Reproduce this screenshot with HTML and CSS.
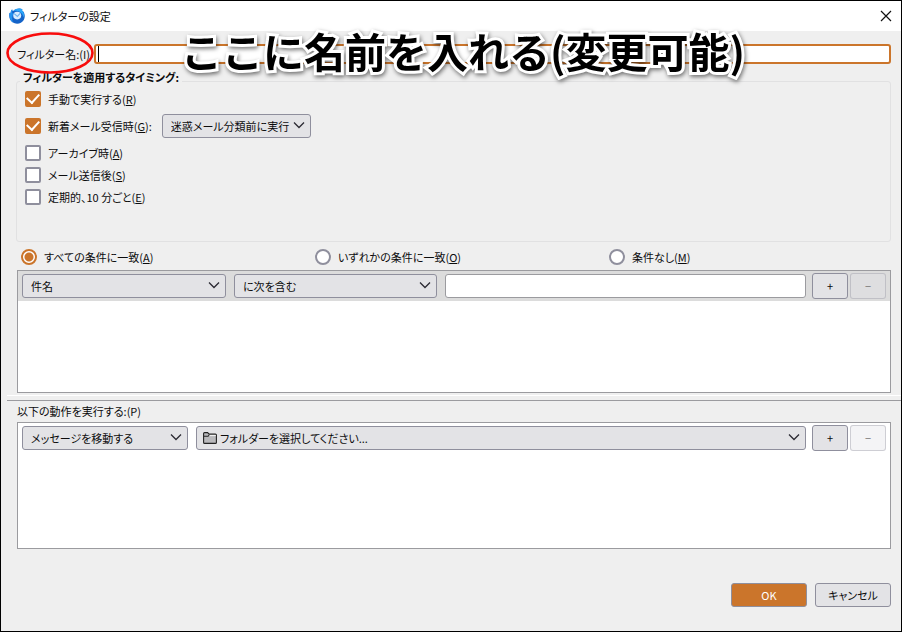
FILE: index.html
```html
<!DOCTYPE html>
<html lang="ja">
<head>
<meta charset="utf-8">
<title>フィルターの設定</title>
<link rel="stylesheet" href="styles.css">
</head>
<body>
<svg class="symbols" aria-hidden="true">
  <symbol id="chevron" viewBox="0 0 12 8"><path d="M1 1.5 6 6.5 11 1.5" fill="none" stroke="#2b2a33" stroke-width="1.3"/></symbol>
</svg>
<div class="window">
  <header class="titlebar">
    <svg class="logo" viewBox="0 0 16 16" aria-hidden="true">
      <path d="M3.200 1.200C3 2.500 3.500 3 4.500 2.800 7 .3 11.500-.2 13.500 1.600L12.800 2.200C16 4 16.500 9 14.800 12 12.500 16 7 16.800 3.500 14.300.5 12.200-.3 8.500.5 4.800L1.500 5.800C1.600 4 2 2.300 3.200 1.200z" fill="#1463c8"/>
      <path d="M.5 4.800C0 9 1.200 12.500 4 14.600c-1-3-1.500-6.500.8-9.600L3.200 5.600 3.200 1.200C2 2.500 1.600 4 1.500 5.800z" fill="#2294f2"/>
      <path d="M4.500 2.800C7 .3 11.500-.2 13.500 1.600L12.800 2.200C15 4 15.600 7 14.500 9.500 14 6.500 12.500 4.500 10 3.500 8 2.800 6 3 4.500 2.800z" fill="#2aa6fa"/>
      <ellipse cx="8.200" cy="7.600" rx="4" ry="3.800" fill="#d8edff"/>
      <path d="M5.200 5.600 8.400 8.400 11.400 5.200" fill="none" stroke="#6fb3ee" stroke-width="1.200"/>
    </svg>
    <h1 class="title">フィルターの設定</h1>
    <button class="close" type="button" aria-label="閉じる">
      <svg viewBox="0 0 12 12"><path d="M1 1 11 11M11 1 1 11" stroke="#111" stroke-width="1.2"/></svg>
    </button>
  </header>
  <form class="content">
    <div class="name-row">
      <label class="name-label" for="name">フィルター名:(I)
        <svg class="ring" viewBox="0 0 88 42" aria-hidden="true"><ellipse cx="44" cy="21" rx="42.500" ry="19.500" fill="none" stroke="#f80c0c" stroke-width="2.600"/></svg>
      </label>
      <span class="name-field"><input id="name" type="text"></span>
      <p class="note">ここに名前を入れる(変更可能)</p>
    </div>

    <fieldset class="timing">
      <legend>フィルターを適用するタイミング:</legend>
      <div class="checks">
        <div class="check"><input id="c1" type="checkbox" checked><label for="c1">手動で実行する(<u>R</u>)</label></div>
        <div class="check tall"><input id="c2" type="checkbox" checked><label for="c2">新着メール受信時(<u>G</u>):</label>
          <span class="select when"><select aria-label="実行の時期"><option>迷惑メール分類前に実行</option></select><svg><use href="#chevron"/></svg></span>
        </div>
        <div class="check"><input id="c3" type="checkbox"><label for="c3">アーカイブ時(<u>A</u>)</label></div>
        <div class="check"><input id="c4" type="checkbox"><label for="c4">メール送信後(<u>S</u>)</label></div>
        <div class="check"><input id="c5" type="checkbox"><label for="c5">定期的、10 分ごと(<u>E</u>)</label></div>
      </div>
    </fieldset>

    <div class="match">
      <div class="check"><input id="r1" type="radio" name="match" checked><label for="r1">すべての条件に一致(<u>A</u>)</label></div>
      <div class="check"><input id="r2" type="radio" name="match"><label for="r2">いずれかの条件に一致(<u>O</u>)</label></div>
      <div class="check"><input id="r3" type="radio" name="match"><label for="r3">条件なし(<u>M</u>)</label></div>
    </div>

    <div class="list">
      <div class="rule selected">
        <span class="select"><select aria-label="対象"><option>件名</option></select><svg><use href="#chevron"/></svg></span>
        <span class="select"><select aria-label="条件"><option>に次を含む</option></select><svg><use href="#chevron"/></svg></span>
        <input class="value" type="text" aria-label="値">
        <span class="pair"><button type="button">+</button><button type="button" disabled>−</button></span>
      </div>
    </div>

    <hr class="splitter">

    <p class="caption">以下の動作を実行する:(P)</p>
    <div class="list actions">
      <div class="rule action">
        <span class="select"><select aria-label="動作"><option>メッセージを移動する</option></select><svg><use href="#chevron"/></svg></span>
        <span class="select folder">
          <select aria-label="フォルダー"><option>フォルダーを選択してください...</option></select>
          <svg><use href="#chevron"/></svg>
          <svg class="folder-icon" viewBox="0 0 14 12" aria-hidden="true"><path d="M.6 10.400V1.600q0-1 1-1h3l1.500 1.500h6.300q1 0 1 1v7.300q0 1-1 1H1.600q-1 0-1-1z" fill="#b9b9bc" stroke="#222" stroke-width="1.100"/><path d="M1 4.300h4L6.500 2.800" fill="none" stroke="#222" stroke-width="1.100"/><path d="M6.500 3.500h6.300" stroke="#efeff0" stroke-width="1.200"/></svg>
        </span>
        <span class="pair"><button type="button">+</button><button type="button" disabled>−</button></span>
      </div>
    </div>

    <footer class="buttons">
      <button class="ok" type="submit">OK</button>
      <button type="button">キャンセル</button>
    </footer>
  </form>
</div>
</body>
</html>
```
FILE: styles.css
```css
* { box-sizing: border-box; }

body {
  margin: 0;
  font: 11px/16px "Noto Sans CJK JP", sans-serif;
  font-feature-settings: "palt";
  color: #0c0c0d;
}

input, select, button {
  margin: 0;
  font: inherit;
  font-feature-settings: inherit;
  color: inherit;
}

p, h1 { margin: 0; }

.symbols { position: absolute; width: 0; height: 0; }

.window {
  min-height: 100vh;
  display: flex;
  flex-direction: column;
  border: 1px solid #000;
  background: #efefef;
}

.titlebar {
  display: flex;
  align-items: center;
  height: 30px;
  padding: 0 7px 0 8px;
  background: #fff;
}
.logo { width: 16px; height: 16px; }
.title { flex: 1; margin-left: 5px; font-size: 11px; font-weight: 400; }
.close { width: 16px; height: 16px; padding: 2px; border: 0; background: none; }
.close svg { display: block; width: 12px; height: 12px; }

.content {
  flex: 1;
  display: flex;
  flex-direction: column;
  padding: 13px 10px 24px 16px;
}

.name-row { position: relative; display: flex; align-items: center; }
.name-label { position: relative; width: 77px; white-space: nowrap; }
.ring { position: absolute; left: -11px; top: -14px; z-index: 1; width: 88px; height: 42px; }
.name-field { position: relative; flex: 1; display: flex; }
.name-field input {
  width: 100%;
  height: 20px;
  padding: 0 4px;
  border: 2px solid #cb752b;
  border-radius: 3px;
  background: #fff;
  outline: 0;
}
.name-field::after {
  content: "";
  position: absolute;
  left: 4px;
  top: 2px;
  width: 1px;
  height: 16px;
  background: #000;
}
.note {
  position: absolute;
  left: 164px;
  top: -18px;
  z-index: 1;
  font-size: 41px;
  line-height: 48px;
  font-weight: 700;
  font-feature-settings: normal;
  white-space: nowrap;
  color: #000;
  -webkit-text-stroke: 6px #fff;
  paint-order: stroke fill;
  filter: drop-shadow(1px 2px 2px #0008);
  pointer-events: none;
}

.timing {
  height: 173px;
  margin: 5px 0 0 -1px;
  padding: 0 8px;
  border: 1px solid #e1e1e2;
  border-radius: 3px;
}
.timing legend { padding: 0 3px 8px; margin-left: -5px; font-weight: 700; }
.checks { margin-top: -5px; }

.check { display: flex; align-items: center; gap: 7px; height: 22px; }
.tall { height: 32px; }
.check input {
  flex: none;
  appearance: none;
  width: 16px;
  height: 16px;
  border: 2px solid #8f8f9d;
  border-radius: 2px;
  background: #fff;
}
.check input:checked { border-color: #cb752b; }
.check input[type="checkbox"]:checked {
  display: grid;
  place-items: center;
  background: #cb752b;
}
.check input[type="checkbox"]:checked::before {
  content: "";
  width: 6px;
  height: 10px;
  margin-top: -4px;
  border: solid #fff;
  border-width: 0 2px 2px 0;
  transform: rotate(42deg);
}
.check input[type="radio"] { border-radius: 50%; }
.check input[type="radio"]:checked { background: radial-gradient(circle, #cb752b 4px, #fff 5px); }

.select { position: relative; display: flex; min-width: 0; }
.select select {
  appearance: none;
  width: 100%;
  height: 24px;
  padding: 0 20px 0 8px;
  border: 1px solid #8f8f9d;
  border-radius: 3px;
  background: #e3e3e6;
}
.select svg {
  position: absolute;
  right: 6px;
  top: 7px;
  width: 12px;
  height: 8px;
  pointer-events: none;
}
.when { width: 149px; margin-left: 3px; }

.match {
  display: grid;
  grid-template-columns: 294fr 294fr 282fr;
  padding: 4px 0 2px 4px;
}

.list { height: 123px; border: 1px solid #9b9b9f; background: #fff; }
.actions { height: 127px; }
.rule {
  display: grid;
  grid-template-columns: 204fr 203fr 361fr 72px;
  column-gap: 8px;
  align-items: center;
  height: 30px;
  padding: 0 4px;
}
.action { grid-template-columns: 166fr 610fr 72px; }
.selected { background: #dcdcdc; }
.value {
  width: 100%;
  min-width: 0;
  height: 24px;
  border: 1px solid #9b9b9f;
  border-radius: 3px;
  background: #fff;
}
.pair { display: flex; gap: 2px; margin-left: -2px; }
.folder select { padding-left: 23px; }
.select .folder-icon { left: 7px; top: 6px; width: 14px; height: 12px; }

button { border: 1px solid #8f8f9d; border-radius: 3px; background: #e3e3e6; padding: 0; }
.pair button { flex: 1; height: 26px; font-feature-settings: normal; }
.pair button:disabled { border-color: #8f8f9d60; background: #e3e3e660; color: #777; }

.splitter {
  height: 6px;
  margin: 2px -10px;
  border: solid #9b9b9f;
  border-width: 0 0 1px;
  background: linear-gradient(#fff 1px, transparent 1px);
}
.caption { margin-bottom: 3px; }

.buttons { display: flex; justify-content: flex-end; gap: 8px; margin-top: auto; }
.buttons button { width: 76px; height: 24px; }
.buttons .ok { background: #cb752b; color: #fff; }
```
